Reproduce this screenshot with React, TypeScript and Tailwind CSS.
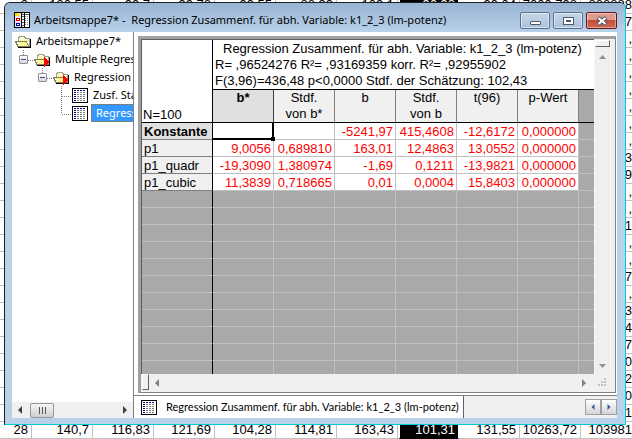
import React, { useState } from 'react';
import clsx from 'clsx';

const sheetRows = [
  { name: 'Konstante', values: ['', '', '-5241,97', '415,4608', '-12,6172', '0,000000'] },
  { name: 'p1', values: ['9,0056', '0,689810', '163,01', '12,4863', '13,0552', '0,000000'] },
  { name: 'p1_quadr', values: ['-19,3090', '1,380974', '-1,69', '0,1211', '-13,9821', '0,000000'] },
  { name: 'p1_cubic', values: ['11,3839', '0,718665', '0,01', '0,0004', '15,8403', '0,000000'] },
];

const sheetColumns = [['b*'], ['Stdf.', 'von b*'], ['b'], ['Stdf.', 'von b'], ['t(96)'], ['p-Wert']];

const firstRow = ['3', '130,55', '99,7', '99,78', '99,55', '88,99', '109,1', '96,98', '99,04', '7000,798', '888888'];
const lastRow = ['28', '140,7', '116,83', '121,69', '104,28', '114,81', '163,43', '101,31', '131,55', '10263,72', '103981'];

// last column of the rows that are mostly hidden by the window
const edgeValues = ['7', ',', ',', ',', ',', ',', ',', ',', '3', '9', ',', ',', '1', ',', ',', '7', ',', '3', '4', '7', '0', '2', '0', '1'];

const backgroundRows = [firstRow, ...edgeValues.map((v) => [...Array(10).fill(''), v]), lastRow];

const BackgroundSheet: React.FC = () => (
  <table className="w-[641px] table-fixed border-separate border-spacing-0 -mt-[3px] font-['Liberation_Sans',sans-serif] text-[13px] text-black">
    <colgroup>
      <col className="w-8" />
      {firstRow.slice(1).map((_, i) => (
        <col key={i} className="w-[61px]" />
      ))}
    </colgroup>
    <tbody>
      {backgroundRows.map((row, r) => (
        <tr key={r} className="h-[17px]">
          {row.map((value, c) => (
            <td
              key={c}
              className={clsx(
                'h-[17px] border-b border-r p-0 text-right leading-4 whitespace-nowrap',
                c === 7 ? 'border-x-2 border-x-white border-b-black bg-black text-white' : 'border-[#c0c0c0]',
                c === 10 ? 'pr-[9px]' : 'pr-[3px]'
              )}
            >
              {value}
            </td>
          ))}
        </tr>
      ))}
    </tbody>
  </table>
);

const AppIcon: React.FC = () => (
  <svg width="16" height="16" viewBox="0 0 16 16" shapeRendering="crispEdges" className="shrink-0">
    <rect width="16" height="16" fill="#000" />
    <rect x="1" y="1" width="6" height="14" fill="#e8e8e8" />
    <rect x="8" y="1" width="3" height="14" fill="#fff" />
    <rect x="11" y="1" width="4" height="14" fill="#fff" />
    <rect x="1" y="1" width="4" height="3" fill="#ffe000" />
    <path d="M2.500 6.500h3v2h-3z" fill="#fff" stroke="#e00000" />
    <path d="M2.500 11.500h3v2h-3z" fill="#fff" stroke="#0000c0" />
    <path d="M8 2.500h7M8 4.500h2M8 7.500h2M8 10.500h2M8 13.500h2" stroke="#555" />
    <path d="M11 4.500h4M11 6.500h4M11 8.500h4M11 10.500h4M11 12.500h4" stroke="#808080" strokeDasharray="1 1" />
    <path d="M10.500 1v14" stroke="#000" />
  </svg>
);

const FolderIcon: React.FC<{ marked?: boolean }> = ({ marked }) => (
  <svg width="17" height="15" viewBox="0 0 17 15" shapeRendering="crispEdges" className="shrink-0">
    <path d="M3.500 7V3.500h1v-1h5v1h1v1h4V12" fill="#fffff0" stroke="#a0a080" />
    <path d="M5 4.500h4M5 6.500h9" stroke="#f8f040" strokeDasharray="1 1" />
    <path d="M.5 7.500h10.500l3 5H3z" fill="#fffff0" stroke="#808060" />
    <path d="M3 8.500h8M3 10.500h9" stroke="#f8f040" strokeDasharray="1 1" />
    <path d="M4 9.500h8M5 11.500h8" stroke="#f8f040" strokeDasharray="1 1" />
    <path d="M3 13.500h12.500V4.500" fill="none" stroke="#000" />
    {marked && <path d="M10 5v10l5-5z" fill="#ff0000" />}
  </svg>
);

const SheetIcon: React.FC = () => (
  <svg width="16" height="15" viewBox="0 0 16 15" shapeRendering="crispEdges" className="shrink-0">
    <path d="M.5.5h15v14H.5z" fill="#fff" stroke="#000" />
    <path d="M2 2.500h12" stroke="#000090" strokeDasharray="2 1" />
    <path d="M2 4.500h2M2 6.500h2M2 8.500h2M2 10.500h2M2 12.500h2" stroke="#000090" />
    <path d="M5 4.500h9M5 6.500h9M5 8.500h9M5 10.500h9M5 12.500h9" stroke="#808080" strokeDasharray="2 1" />
  </svg>
);

const Arrow: React.FC<{ d: string; className?: string }> = ({ d, className }) => (
  <svg width="8" height="8" viewBox="0 0 8 8" className={clsx('shrink-0', className)}>
    <path d={d} fill="currentColor" />
  </svg>
);

const LEFT = 'M6 0v8L2 4z';
const RIGHT = 'M2 0v8l4-4z';
const UP = 'M0 6h7L3.500 2z';
const DOWN = 'M0 2h7L3.500 6z';

const Expander: React.FC<{ label: string }> = ({ label }) => (
  <button
    type="button"
    aria-label={label}
    className="relative mr-1.5 flex h-[9px] w-[9px] shrink-0 items-center justify-center rounded-[1px] border border-[#919191] bg-linear-to-b from-white to-[#d8d8d8]"
  >
    <span className="h-px w-[5px] bg-[#2b4f9e]" />
  </button>
);

const TitleBar: React.FC = () => (
  <header className="flex h-[29px] shrink-0 items-start bg-linear-to-b from-[#98b4d2] to-[#b9d1ea] pl-[9px] pr-2">
    <div className="flex flex-1 items-center gap-1 pt-[9px]">
      <AppIcon />
      <h1 className="text-[11px] leading-4 whitespace-pre text-black">
        {'Arbeitsmappe7* -  Regression Zusammenf. für abh. Variable: k1_2_3 (lm-potenz)'}
      </h1>
    </div>
    <div className="flex gap-[3px] pt-[9px]">
      <button
        type="button"
        aria-label="Minimieren"
        className="flex h-[17px] w-[30px] items-center justify-center rounded-[2px] border border-[#5d7189] bg-linear-to-b from-[#c6d6e8] to-[#a9c1dc] inset-ring inset-ring-white/50"
      >
        <span className="mt-1 h-1 w-[11px] rounded-[1px] border border-[#535666] bg-white" />
      </button>
      <button
        type="button"
        aria-label="Maximieren"
        className="flex h-[17px] w-[30px] items-center justify-center rounded-[2px] border border-[#5d7189] bg-linear-to-b from-[#c6d6e8] to-[#a9c1dc] inset-ring inset-ring-white/50"
      >
        <svg width="11" height="8" viewBox="0 0 11 8" shapeRendering="crispEdges">
          <path d="M.5.5h10v7H.5z" fill="#fff" stroke="#535666" />
          <path d="M3.500 3.500h4v1h-4z" fill="#a9c1dc" stroke="#535666" />
        </svg>
      </button>
      <button
        type="button"
        aria-label="Schließen"
        className="flex h-[17px] w-[31px] items-center justify-center rounded-[2px] border border-[#5c1a1a] bg-linear-to-b from-[#e09a8c] from-45% via-[#c44b3a] via-50% to-[#cf6a50] inset-ring inset-ring-white/40"
      >
        <svg width="12" height="10" viewBox="0 0 12 10">
          <path d="M2 1.500l8 7M10 1.500l-8 7" stroke="#535666" strokeWidth="4" />
          <path d="M2.500 2l7 6M9.500 2l-7 6" stroke="#fff" strokeWidth="2.200" />
        </svg>
      </button>
    </div>
  </header>
);

const TreePanel: React.FC = () => {
  const [selected, setSelected] = useState(1);
  const items = ['Zusf. Stat', 'Regress'];

  return (
    <aside className="flex w-[122px] shrink-0 flex-col overflow-hidden border-r border-[#808080] bg-white text-[11px] whitespace-nowrap text-black">
      <div className="relative flex-1 overflow-hidden">
        <svg width="70" height="90" className="absolute left-0 top-0" shapeRendering="crispEdges">
          <path
            d="M11.500 18v5M16 28.500h6M30.500 36v5M35 46.500h6M49.500 54v28M50 64.500h10M50 82.500h10"
            fill="none"
            stroke="#808080"
            strokeDasharray="1 1"
          />
        </svg>
        <div className="flex h-[18px] items-center gap-1 pl-[3px]">
          <FolderIcon />
          Arbeitsmappe7*
        </div>
        <div className="flex h-[18px] items-center pl-[7px]">
          <Expander label="Multiple Regression einklappen" />
          <FolderIcon marked />
          <span className="pl-1">Multiple Regression</span>
        </div>
        <div className="flex h-[18px] items-center pl-[26px]">
          <Expander label="Regression einklappen" />
          <FolderIcon marked />
          <span className="pl-1">Regression</span>
        </div>
        {items.map((item, i) => (
          <div key={item} className="flex h-[18px] items-center gap-[3px] pl-[60px]">
            <SheetIcon />
            <button
              type="button"
              onClick={() => setSelected(i)}
              className={clsx(
                'h-[18px]',
                selected === i ? 'border border-dotted border-[#c06000] bg-[#3399ff] px-1 text-white' : 'px-0.5'
              )}
            >
              {item}
            </button>
          </div>
        ))}
      </div>
      <div className="flex h-4 shrink-0 items-center bg-[#f0f0f0] pl-1 pr-1 text-[#404040]">
        <button type="button" aria-label="Nach links">
          <Arrow d={LEFT} />
        </button>
        <button
          type="button"
          aria-label="Bildlauf"
          className="ml-1.5 flex h-[15px] w-6 items-center justify-center gap-0.5 rounded-[2px] border border-[#979797] bg-linear-to-b from-[#f5f5f5] to-[#cfcfcf]"
        >
          <span className="h-[7px] w-px bg-[#555]" />
          <span className="h-[7px] w-px bg-[#555]" />
          <span className="h-[7px] w-px bg-[#555]" />
        </button>
        <button type="button" aria-label="Nach rechts" className="ml-auto">
          <Arrow d={RIGHT} />
        </button>
      </div>
    </aside>
  );
};

const ResultTable: React.FC = () => (
  <table className="w-full table-fixed border-separate border-spacing-0 text-[13px] text-black">
    <colgroup>
      <col className="w-[71px]" />
      {sheetColumns.map((_, i) => (
        <col key={i} className="w-[61px]" />
      ))}
      <col />
    </colgroup>
    <thead>
      <tr>
        <th rowSpan={2} className="border-r border-b border-black bg-white p-0 pl-px text-left align-bottom font-normal leading-[14px]">
          N=100
        </th>
        <th colSpan={7} className="h-[50px] border-b border-black bg-white p-0 pl-0.5 text-left font-normal leading-4 whitespace-nowrap">
          <p className="pl-2">Regression Zusammenf. für abh. Variable: k1_2_3 (lm-potenz)</p>
          <p>R= ,96524276 R²= ,93169359 korr. R²= ,92955902</p>
          <p>F(3,96)=436,48 p&lt;0,0000 Stdf. der Schätzung: 102,43</p>
        </th>
      </tr>
      <tr>
        {sheetColumns.map((lines, i) => (
          <th
            key={i}
            className={clsx(
              'h-[33px] border-r border-b border-b-black p-0 align-top leading-4',
              i === 0 ? 'border-r-[#404040] bg-[#e0e0e0] font-bold' : 'border-r-[#808080] bg-[#f0f0f0] font-normal'
            )}
          >
            {lines.map((line) => (
              <div key={line}>{line}</div>
            ))}
          </th>
        ))}
        <th className="border-b border-black p-0" />
      </tr>
    </thead>
    <tbody>
      {sheetRows.map((row, r) => (
        <tr key={row.name}>
          <th
            className={clsx(
              'h-[17px] border-r border-b border-r-black border-b-[#808080] p-0 pt-0.5 pl-0.5 text-left leading-[14px]',
              r === 0 ? 'bg-[#e0e0e0] font-bold' : 'bg-[#f0f0f0] font-normal'
            )}
          >
            {row.name}
          </th>
          {row.values.map((value, c) => (
            <td
              key={c}
              className={clsx(
                'h-[17px] border-r border-b border-[#c0c0c0] bg-white p-0 pt-0.5 pr-0.5 text-right leading-[14px] text-[#ff0000]',
                r === 0 && c === 0 && 'relative'
              )}
            >
              {value}
              {r === 0 && c === 0 && (
                <div className="absolute -top-px -right-px -bottom-px -left-px border-2 border-t border-l border-black">
                  <span className="absolute -right-[3px] -bottom-[3px] h-1 w-1 bg-black" />
                </div>
              )}
            </td>
          ))}
          <td className="border-b border-[#c0c0c0] p-0" />
        </tr>
      ))}
      {/* unused rows below the results */}
      {Array.from({ length: 11 }, (_, r) => (
        <tr key={r}>
          <td className="h-[17px] border-r border-b border-r-black border-b-[#c0c0c0] p-0" />
          {sheetColumns.map((_, c) => (
            <td key={c} className="border-r border-b border-[#c0c0c0] p-0" />
          ))}
          <td className="border-b border-[#c0c0c0] p-0" />
        </tr>
      ))}
    </tbody>
  </table>
);

const SheetPanel: React.FC = () => (
  <main className="flex min-w-0 flex-1 flex-col bg-white font-['Liberation_Sans',sans-serif]">
    <div className="flex min-h-0 flex-1 flex-col border-b border-[#808080] pt-1 pb-0.5 pl-1 pr-px">
      <div className="flex min-h-0 flex-1 flex-col border-t-3 border-r border-b border-l-3 border-t-[#a0a0a0] border-r-[#808080] border-b-[#808080] border-l-[#a0a0a0] bg-[#f0f0f0] pr-1">
        <div className="flex min-h-0 flex-1">
          <div className="min-w-0 flex-1 overflow-hidden border-t border-l border-[#606060] bg-[#a9a9a9]">
            <ResultTable />
          </div>
          <div className="flex w-[17px] shrink-0 flex-col items-center border-x border-[#f8f8f8] bg-[#efefef] pt-px text-[#909090]">
            <button
              type="button"
              aria-label="Fenster teilen"
              className="h-[7px] w-full border border-t-white border-r-[#606060] border-b-[#606060] border-l-white bg-[#f0f0f0]"
            />
            <button type="button" aria-label="Nach oben" className="mt-1.5">
              <Arrow d={UP} />
            </button>
            <button type="button" aria-label="Nach unten" className="mt-auto mb-1">
              <Arrow d={DOWN} />
            </button>
          </div>
        </div>
        <div className="flex h-[18px] shrink-0 items-center pl-px text-[#808080]">
          <button
            type="button"
            aria-label="Fenster teilen"
            className="h-4 w-[7px] self-start border border-t-white border-r-[#606060] border-b-[#606060] border-l-white bg-[#f0f0f0]"
          />
          <button type="button" aria-label="Nach links" className="ml-1">
            <Arrow d={LEFT} />
          </button>
          <button type="button" aria-label="Nach rechts" className="ml-auto mr-[9px]">
            <Arrow d={RIGHT} />
          </button>
          <svg width="10" height="10" className="mr-1" shapeRendering="crispEdges">
            <path d="M7 0h2v2h-2zM4 3h2v2h-2zM7 3h2v2h-2zM1 6h2v2h-2zM4 6h2v2h-2zM7 6h2v2h-2z" fill="#c0c0c0" />
          </svg>
        </div>
      </div>
    </div>
    <div className="flex h-[22px] shrink-0 items-center bg-[#f0f0f0]">
      <button
        type="button"
        className="flex h-full items-center gap-[9px] border-r border-[#606070] bg-white pl-[7px] pr-1 font-['Lato',sans-serif] text-[11px] whitespace-nowrap text-black"
      >
        <SheetIcon />
        Regression Zusammenf. für abh. Variable: k1_2_3 (lm-potenz)
      </button>
      <div className="ml-auto flex text-[#3a55a5]">
        <button
          type="button"
          aria-label="Vorheriges Blatt"
          className="flex h-4 w-4 items-center justify-center border border-[#a0a0a0] bg-linear-to-b from-white to-[#d4d4d4]"
        >
          <Arrow d="M5.500 1v6L2.500 4z" />
        </button>
        <button
          type="button"
          aria-label="Nächstes Blatt"
          className="flex h-4 w-4 items-center justify-center border border-[#a0a0a0] bg-linear-to-b from-white to-[#d4d4d4]"
        >
          <Arrow d="M2.500 1v6l3-3z" />
        </button>
      </div>
    </div>
  </main>
);

const App: React.FC = () => {
  return (
    <div className="relative h-screen overflow-hidden bg-white">
      <BackgroundSheet />
      <div className="absolute top-0.5 right-[6px] bottom-[14px] left-1 flex flex-col overflow-hidden rounded-t-md border border-[#202020] border-r-[#00c8d8] border-b-[#00c8d8] bg-[#b9d1ea] font-['Noto_Sans','Open_Sans',sans-serif]">
        <TitleBar />
        <div className="flex min-h-0 flex-1 pr-[8px] pb-1.5 pl-[7px]">
          <TreePanel />
          <SheetPanel />
        </div>
      </div>
    </div>
  );
};

export default App;
